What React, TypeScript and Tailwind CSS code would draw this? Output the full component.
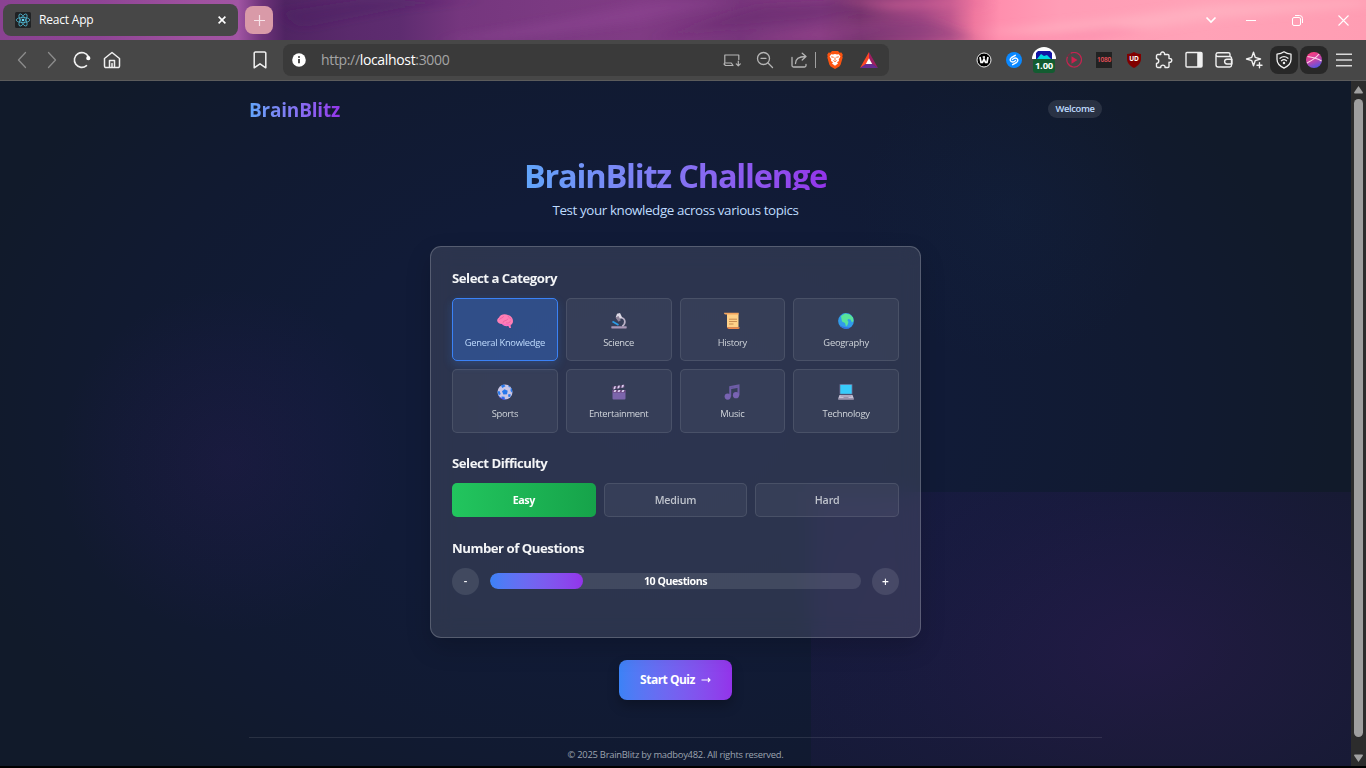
import React from "react";

const FONT = "font-['Open_Sans','Noto_Sans',sans-serif]";

function Slot({ children }: { children: React.ReactNode }) {
  return <div className="flex h-10 w-[30px] shrink-0 items-center justify-center">{children}</div>;
}

type IconProps = { size?: number; color?: string; width?: number; children: React.ReactNode };
function Line({ size = 18, color = "#f0f0f0", width = 1.4, children }: IconProps) {
  return (
    <svg width={size} height={size} viewBox="0 0 18 18" fill="none" stroke={color} strokeWidth={width} strokeLinecap="round" strokeLinejoin="round" className="shrink-0">
      {children}
    </svg>
  );
}

function ReactLogo() {
  return (
    <svg width="16" height="16" viewBox="0 0 16 16" className="shrink-0">
      <rect width="16" height="16" rx="1.5" fill="#202224" />
      <g fill="none" stroke="#4fb3cc" strokeWidth="0.8">
        <ellipse cx="8" cy="8" rx="6.8" ry="2.6" />
        <ellipse cx="8" cy="8" rx="6.8" ry="2.6" transform="rotate(60 8 8)" />
        <ellipse cx="8" cy="8" rx="6.8" ry="2.6" transform="rotate(120 8 8)" />
      </g>
      <circle cx="8" cy="8" r="1.3" fill="#61dafb" />
    </svg>
  );
}

function TabStrip() {
  return (
    <div className="relative flex h-10 items-center bg-[linear-gradient(90deg,#8a4292_0,#8f4595_100px,#a052a0_200px,#a155a3_238px,#6d3379_262px,#502463_285px,#5a2a6c_350px,#5e2c70_400px,#75367e_460px,#7b3a82_550px,#803b84_640px,#76357b_740px,#813a80_820px,#78356f_860px,#a04683_920px,#c0588e_950px,#f0789f_975px,#ff8fae_1000px,#ff9db6_1060px,#ffa2b7_1200px,#ff9db3_1366px)]">
      <svg className="absolute inset-0" width="1366" height="40" viewBox="0 0 1366 40">
        <defs><filter id="haze" x="-20%" y="-60%" width="140%" height="220%"><feGaussianBlur stdDeviation="9 4" /></filter></defs>
        <g filter="url(#haze)">
          <path d="M300 28L400 8l80-8h-120l-80 12z" fill="#4a2060" opacity=".35" />
          <path d="M440 40L560 20 660 0h80L640 22 500 40z" fill="#94489a" opacity=".35" />
          <path d="M650 40L760 6 900 0 820 20 700 30z" fill="#632a6b" opacity=".4" />
          <path d="M740 40L840 26 900 22 840 40z" fill="#a64a92" opacity=".35" />
          <path d="M840 0h140v6l-90 4z" fill="#e0689c" opacity=".5" />
          <path d="M820 30l110-10 50 20H840z" fill="#7a3579" opacity=".4" />
          <path d="M975 32L1100 20l120-16 146-4v6L1220 18l-120 18z" fill="#ffbfca" opacity=".45" />
          <path d="M990 40l120-14 40 4-60 10z" fill="#fa7ba2" opacity=".45" />
        </g>
      </svg>
      <div className="relative ml-[3px] flex h-8 w-[235px] items-center rounded-lg bg-[#474747] pl-3 pr-3">
        <ReactLogo />
        <span className="ml-2 text-[12px] tracking-[-0.2px] text-white">React App</span>
        <svg width="8" height="8" viewBox="0 0 8 8" className="ml-auto" stroke="#fff" strokeWidth="1.6"><path d="M.6.6l6.8 6.8M7.4.6L.6 7.4" /></svg>
      </div>
      <div className="relative ml-[7px] flex h-7 w-7 items-center justify-center rounded-lg bg-[#d99aa8]">
        <svg width="11" height="11" viewBox="0 0 11 11" stroke="#f7e2e8" strokeWidth="1.2"><path d="M5.500 0v11M0 5.500h11" /></svg>
      </div>
      <div className="relative ml-auto flex items-center text-white">
        <div className="flex w-10 justify-center"><svg width="12" height="8" viewBox="0 0 12 8" fill="none" stroke="#fff" strokeWidth="1.7"><path d="M1.500 1.500L6 6l4.500-4.500" /></svg></div>
        <div className="flex w-10 justify-center"><svg width="10" height="2" viewBox="0 0 10 2"><rect y="1" width="10" height="1" fill="#fff" /></svg></div>
        <div className="flex w-[52px] justify-center"><svg width="11" height="11" viewBox="0 0 11 11" fill="none" stroke="#fff" strokeWidth="1"><rect x=".5" y="2.500" width="8" height="8" rx="1.500" /><path d="M3 .5h4.500a3 3 0 0 1 3 3V8" /></svg></div>
        <div className="flex w-10 justify-center"><svg width="11" height="11" viewBox="0 0 11 11" stroke="#fff" strokeWidth="1.100"><path d="M.5.5l10 10M10.500.5l-10 10" /></svg></div>
        <div className="w-[3px]" />
      </div>
    </div>
  );
}

function BraveIcon() {
  return (
    <svg width="16" height="18" viewBox="0 0 16 18">
      <path d="M5 0h6l1.600 1.700 1.800-.2 1.400 2.300-.5 1.500.4 1.300-2.100 7.200-1.300 1.700L8 18l-4.300-2.500-1.300-1.700L.3 6.600l.4-1.300L.2 3.800l1.400-2.300 1.800.2z" fill="#fb5411" />
      <path d="M8 3l2 .5 1.700-.3 1.700 2.400-1.700 3 .3 1.400L10 11.300 11 12.500 8 14.800 5 12.500l1-1.200L4 10l.3-1.400-1.700-3 1.700-2.400L6 3.500z" fill="#fff" />
      <path d="M4.200 5.800l2.500.5M11.800 5.800l-2.500.5M8 6.500v2.700M6.400 9.500L8 10.600l1.600-1.100" stroke="#fb5411" strokeWidth=".9" fill="none" />
    </svg>
  );
}

function Toolbar() {
  return (
    <div className="flex h-[41px] items-start border-b border-[#5c5c5c] bg-[#474747] pl-[7px] pr-[7px]">
      <Slot><Line color="#8c8c8c" width={1.3}><path d="M12.500 1.500L5.500 9l7 7.500" /></Line></Slot>
      <Slot><Line color="#8c8c8c" width={1.3}><path d="M5.500 1.500L12.500 9l-7 7.500" /></Line></Slot>
      <Slot>
        <Line width={1.6}><path d="M13.500 14.700A7.400 7.400 0 1 1 15.300 5.500" /><circle cx="15.300" cy="7.200" r="1.300" fill="#fff" stroke="#fff" /></Line>
      </Slot>
      <Slot><Line width={1.5}><path d="M1.500 7.500L9 1.500l7.500 6v7.600a1.500 1.500 0 0 1-1.500 1.500H3a1.500 1.500 0 0 1-1.500-1.500zM6.500 16.500V9.500h5v7M9 12.500v4" /></Line></Slot>
      <div className="w-[118px]" />
      <Slot><Line width={1.5}><path d="M3.200 2.500A1.300 1.300 0 0 1 4.500 1h9a1.300 1.300 0 0 1 1.300 1.500v14.300L9 12.800l-5.800 4z" /></Line></Slot>
      <div className="ml-2 mt-1 flex h-8 w-[606px] items-center rounded-lg bg-[#3a3a3a] pl-[9px]">
        <svg width="14" height="14" viewBox="0 0 14 14"><circle cx="7" cy="7" r="6.800" fill="#fff" /><path d="M7 6v4.300" stroke="#3a3a3a" strokeWidth="1.800" /><circle cx="7" cy="3.900" r="1" fill="#3a3a3a" /></svg>
        <span className="ml-[15px] whitespace-nowrap text-[14px] leading-none tracking-[-0.34px] text-[#a5a5a5]">http://<span className="text-white">localhost</span>:3000</span>
        <div className="ml-auto flex items-center pr-[11px]">
          <Line color="#b5b5b5" width={1.2}><path d="M10 14.500H2.500L1 13l.8-1.200V4h14v4.500M1.800 12h6.500l1.700 2.500M15.300 10v4.800M13.300 12.900l2 2 2-2" /></Line>
          <div className="ml-[15px]"><Line color="#b5b5b5" width={1.300}><circle cx="7.500" cy="7.500" r="6" /><path d="M12 12l4.500 4.500M5 7.300h5" /></Line></div>
          <div className="ml-[16px]"><Line color="#b5b5b5" width={1.300}><path d="M2 6.500v8A1.500 1.500 0 0 0 3.500 16h11a1.500 1.500 0 0 0 1.500-1.500V13.500M5.500 12.500c0-4.500 3-7 10-7M12.200 2.200l3.800 3.300L12.200 9" /></Line></div>
          <div className="ml-[7px] h-4 w-px bg-[#a0a0a0]" />
          <div className="ml-[11px]"><BraveIcon /></div>
          <svg className="ml-[17px]" width="18" height="16" viewBox="0 0 18 16"><path d="M9 0L0 16l9-5z" fill="#ff4724" /><path d="M9 0l9 16-9-6z" fill="#9e1f63" /><path d="M0 16h18l-5.500-4h-7z" fill="#662d91" /><path d="M9 6.300l3.200 5.800H5.800z" fill="#fff" /></svg>
        </div>
      </div>
      <div className="ml-auto flex">
        <Slot><svg width="16" height="16" viewBox="0 0 16 16"><circle cx="8" cy="8" r="7" fill="#000" stroke="#eee" strokeWidth="1" /><path d="M4 5l1 5.300h1.500L8 7l1.500 3.300H11L12 5M6.700 5H9" fill="none" stroke="#fff" strokeWidth="1.700" /></svg></Slot>
        <Slot><svg width="16" height="16" viewBox="0 0 16 16"><circle cx="8" cy="8" r="8" fill="#0a88ff" /><path d="M9.300 3.300L5.300 5.700C3.700 6.900 3.900 8.500 5.200 9.500c1 .8 2.200.6 3 0l1.400-1M6.700 12.700l4-2.400c1.600-1.200 1.400-2.800.1-3.800-1-.8-2.200-.6-3 0l-1.400 1" fill="none" stroke="#fff" strokeWidth="1.400" strokeLinecap="round" /></svg></Slot>
        <Slot>
          <div className="relative h-[26px] w-[24px]">
            <svg width="24" height="18" viewBox="0 0 24 18"><path d="M0 12a12 12 0 0 1 24 0z" fill="#fff" /><path d="M4 12V6l2-2h12l2 2v6z" fill="#1113a5" /><path d="M5 12l4-5 3 2 3-1 4 4z" fill="#00d8df" /></svg>
            <div className="absolute left-px top-[12px] flex h-[14px] w-[22px] items-center justify-center rounded-[3px] bg-[#135c31] text-[9.500px] font-bold leading-none tracking-[-0.2px] text-white">1.00</div>
          </div>
        </Slot>
        <Slot><svg width="16" height="16" viewBox="0 0 16 16"><path d="M4.500 1.400A7.300 7.300 0 1 1 1.500 4.700" fill="none" stroke="#c42450" strokeWidth="1.200" /><path d="M1.500 4.500A7.300 7.300 0 0 1 5 1.300" fill="none" stroke="#7d2c43" strokeWidth="1.200" /><path d="M5.500 4.300l6 3.700-6 3.700z" fill="#d01f4e" /></svg></Slot>
        <Slot><div className="flex h-4 w-4 items-center justify-center bg-[#222] text-[6.500px] font-semibold leading-none tracking-[-0.2px] text-[#f0525b]">1080</div></Slot>
        <Slot>
          <div className="relative flex h-4 w-4 items-center justify-center">
            <svg className="absolute inset-0" width="16" height="16" viewBox="0 0 16 16"><path d="M8 0c2 1.300 4 1.800 7 2v5c0 4-3 7-7 9-4-2-7-5-7-9V2c3-.2 5-.7 7-2z" fill="#800000" /></svg>
            <span className="relative -mt-[2px] text-[6.500px] font-bold leading-none text-white">UD</span>
          </div>
        </Slot>
        <Slot><Line><path d="M1.500 4.800a1.300 1.300 0 0 1 1.300-1.300h3c-.8-3.300 4.400-3.300 3.700 0h3.200A1.300 1.300 0 0 1 14 4.800v2.700c3.700-.7 3.700 4.400 0 3.800v3.900a1.300 1.300 0 0 1-1.300 1.300H10c.7-3.200-4.900-3.200-4.200 0h-3a1.300 1.300 0 0 1-1.300-1.300v-2.700c3-.3 3-4.500 0-4.800z" /></Line></Slot>
        <Slot><Line><rect x="1" y="1.500" width="16" height="14.500" rx="1" /><path d="M12.200 2h4.800v14h-4.800z" fill="#f0f0f0" stroke="none" /></Line></Slot>
        <Slot><Line><path d="M15 5.500V3.200a1.500 1.500 0 0 0-1.500-1.500H3A2 2 0 0 0 1 3.500v10.300A2.200 2.200 0 0 0 3.200 16h11.600a1.700 1.700 0 0 0 1.700-1.700V7.200a1.700 1.700 0 0 0-1.700-1.700H3A2 2 0 0 1 1 3.500M17 8.200h-5a2.300 2.300 0 0 0 0 4.800h5z" /></Line></Slot>
        <Slot><Line><path d="M8.500 1.200l1.700 5.100 5.300 1.700-5.300 1.700-1.700 5.100-1.700-5.100L1.500 8l5.300-1.700zM14.500 11.800v5M12 14.300h5" /></Line></Slot>
        <Slot><div className="flex h-7 w-7 shrink-0 items-center justify-center rounded-lg bg-[#282828]"><Line width={1.300}><path d="M9 .8c2 1.500 4.500 2.200 7 2.300v5.200c0 4.200-3 7-7 8.900-4-1.900-7-4.700-7-8.900V3.100C4.500 3 7 2.300 9 .8zM5 7.200c2.500-2 5.500-2 8 0M6.500 9.700c1.600-1.300 3.400-1.300 5 0" /><circle cx="9" cy="12" r=".6" fill="#fff" /></Line></div></Slot>
        <Slot>
          <div className="flex h-7 w-7 shrink-0 items-center justify-center rounded-lg bg-[#282828]">
            <svg width="16" height="16" viewBox="0 0 16 16"><defs><linearGradient id="orb" x1=".3" y1="0" x2=".7" y2="1"><stop offset="0" stopColor="#ff3d7c" /><stop offset=".5" stopColor="#c544a8" /><stop offset="1" stopColor="#4c55e8" /></linearGradient></defs><circle cx="8" cy="8" r="8" fill="url(#orb)" /><path d="M1 11C5 9 10 6 13 2M1.500 4.500C6 5.500 11 6 15.500 9" fill="none" stroke="#ffd3e8" strokeWidth="1.100" /></svg>
          </div>
        </Slot>
        <Slot><svg width="16" height="14" viewBox="0 0 16 14" stroke="#dadada" strokeWidth="1.500"><path d="M0 1.300h16M0 7h16M0 12.700h16" /></svg></Slot>
      </div>
    </div>
  );
}

const categories: { name: string; icon: React.ReactNode }[] = [
  {
    name: "General Knowledge",
    icon: (
      <>
        <path d="M2 4.500C3.500 1 8 .6 11 2c3 .8 5 3 5 6 0 2-.9 3.500-2.500 4L14 15c-1.500.5-2.300-.7-2.500-2C8 13.600 6 12.500 5 11 2 11 .5 9.500.2 8 0 6.500.8 5.200 2 4.500z" fill="#ff7fb5" />
        <path d="M2.500 6.500c1-2 3.500-1 4-3M6 9.500c0-2.500 3.500-1 5-3.500M9.500 10c2 .5 3.500-.5 4-2M11 3c0 2 2.500 1.500 3 3" fill="none" stroke="#e8589f" strokeWidth=".7" strokeLinecap="round" />
        <path d="M5.500 11c3 1.500 6 .5 8 1" fill="none" stroke="#f562cf" />
      </>
    ),
  },
  {
    name: "Science",
    icon: (
      <>
        <rect x=".3" y="13.200" width="15.400" height="2.200" rx=".6" fill="#a896b5" />
        <path d="M9.500 4.500c6 1 5 6.500 1.800 8.700" fill="none" stroke="#bbb2c7" strokeWidth="1.700" />
        <path d="M6 .8L9 0l2.200 4.500L7 7 4.800 4z" fill="#ded9e5" />
        <path d="M4.500 4.500l3 4.300 2.300-1.500L7.500 3z" fill="#8d8299" />
        <path d="M1.500 8.500l6 3.500" stroke="#2c9de7" strokeWidth="1.700" />
      </>
    ),
  },
  {
    name: "History",
    icon: (
      <>
        <path d="M3 .5h11.500v14H3z" fill="#ffd188" />
        <path d="M0 -.2h14.700v1.700H1.500A1.500 1.500 0 0 1 0 -.2z" fill="#f3a55f" />
        <path d="M3 14.300h12.700c0 1-.5 1.700-1.500 1.700H5a2 2 0 0 1-2-1.700z" fill="#f08a4b" />
        <path d="M5 6.200h8M5 8.500h8M5 11h4.500" stroke="#c88c50" strokeWidth="1" />
      </>
    ),
  },
  {
    name: "Geography",
    icon: (
      <>
        <circle cx="8" cy="8" r="7.900" fill="#319bea" />
        <path d="M1.500 12A7.800 7.800 0 0 0 13 14.200 C8 15 4 13.500 1.500 12z" fill="#356be0" />
        <path d="M3 3L7 .4l5 1 3 3.100.5 3.500-1.500 1.500-1.500-3L10 6l-.5 1.500L10.500 9 9.500 12 8 13.500 7 10 4 8.500 3.500 6z" fill="#58e39a" />
      </>
    ),
  },
  {
    name: "Sports",
    icon: (
      <>
        <circle cx="8" cy="8" r="7.500" fill="#c9c6e6" />
        <path d="M7.500 5.200l3.200 1.500-.7 3.500-3.600.3L5 7.300zM4 1.500l3-1 1.500 1.800L5.200 4zM.6 7.500L2.500 7l1.200 3-2 1.500zM15.400 9L13.500 7l.3-3.500L15 5zM4.500 12.500l3 .3.500 2.600-3-.7zM13.500 12.800l-2 .2-.5-2.500 2.500-.5zM11 1.200l2.500 1.600-1.500.8z" fill="#2878ec" />
        <path d="M1.500 12a7.500 7.500 0 0 0 8.500 3.200C7 15 4 14 1.500 12z" fill="#4a4ae0" />
      </>
    ),
  },
  {
    name: "Entertainment",
    icon: (
      <>
        <path d="M1.500 6h13v8.500a1 1 0 0 1-1 1h-11a1 1 0 0 1-1-1z" fill="#7c65ab" />
        <path d="M1.500 6h13v2.500h-13z" fill="#6b477c" />
        <path d="M1 2.800L13.500.5l.5 2.700L1.500 5.500z" fill="#59436d" />
        <path d="M3 2.500l2-.4-.8 2.900-1.800.4zM7 1.800l2-.4L8.200 4.200l-2 .4zM11 1l2-.3-.7 2.700-2 .3zM3.500 6h2l-1 2h-2zM7.500 6h2l-1 2h-2zM11.500 6h2l-1 2h-2z" fill="#dccdf0" />
      </>
    ),
  },
  {
    name: "Music",
    icon: (
      <>
        <path d="M6.200 12.500V3l8.300-1.500v9.700" fill="none" stroke="#6e5da6" strokeWidth="2" />
        <path d="M6.200 4.500l8.300-1.500" stroke="#6e5da6" strokeWidth="1.500" />
        <circle cx="3.700" cy="12.600" r="3.100" fill="#7863b2" />
        <circle cx="12" cy="11.200" r="3.100" fill="#7863b2" />
      </>
    ),
  },
  {
    name: "Technology",
    icon: (
      <>
        <rect x="1.500" y="0" width="13" height="10.500" rx=".7" fill="#68658b" />
        <rect x="2.300" y=".8" width="11.400" height="9" fill="#38ccfb" />
        <path d="M1.500 11h13l1.300 3.500H.2z" fill="#c7c1d4" />
        <path d="M2.500 12h11M5.500 13.500h5" stroke="#8e87a1" strokeWidth=".8" />
        <path d="M.2 14.300h15.600v1.400H.2z" fill="#aaa0b8" />
      </>
    ),
  },
];

function CategoryCard({ name, icon, active }: { name: string; icon: React.ReactNode; active: boolean }) {
  return (
    <div
      className={
        "flex flex-col items-center rounded-[5px] border pt-[14px] " +
        (active
          ? "border-[#3b82f6] bg-[#3b82f6]/35 text-[#bfdbfe] shadow-[0_4px_10px_rgba(59,130,246,0.22)]"
          : "border-white/10 bg-white/5 text-[#d1d5db]")
      }
    >
      <svg className="shrink-0 overflow-visible" width="16" height="16" viewBox="0 0 16 16">{icon}</svg>
      <span className="mt-[7px] whitespace-nowrap text-[9.4px] font-medium leading-[14px] tracking-[-0.28px]">{name}</span>
    </div>
  );
}

function SectionTitle({ children }: { children: React.ReactNode }) {
  return <h2 className="text-[13.2px] font-bold leading-[20px] tracking-[-0.48px] text-[#f4f5f7]">{children}</h2>;
}

function SetupCard() {
  const count = 10;
  return (
    <section className="mt-[26px] h-[392px] w-[491px] rounded-[11px] border border-white/20 bg-white/[0.115] px-[21px] pt-[21px] shadow-[0_10px_25px_rgba(0,0,0,0.18)] backdrop-blur-[11px]">
      <SectionTitle>Select a Category</SectionTitle>
      <div className="mt-[10px] grid grid-cols-4 grid-rows-[63px_64px] gap-2">
        {categories.map((c, i) => (
          <CategoryCard key={c.name} name={c.name} icon={c.icon} active={i === 0} />
        ))}
      </div>
      <div className="mt-[20px]"><SectionTitle>Select Difficulty</SectionTitle></div>
      <div className="mt-[10px] grid h-[34px] grid-cols-3 gap-2 text-[10.7px] font-semibold tracking-[-0.15px]">
        <div className="flex items-center justify-center rounded-[5px] bg-linear-to-r from-[#22c55e] to-[#16a34a] font-bold tracking-[-0.45px] text-white">Easy</div>
        <div className="flex items-center justify-center rounded-[5px] border border-white/10 bg-white/5 text-[#bfc3cc]">Medium</div>
        <div className="flex items-center justify-center rounded-[5px] border border-white/10 bg-white/5 text-[#bfc3cc]">Hard</div>
      </div>
      <div className="mt-[21px]"><SectionTitle>Number of Questions</SectionTitle></div>
      <div className="mt-[10px] flex items-center gap-[11px]">
        <div className="flex h-[27px] w-[27px] items-center justify-center rounded-full bg-white/10 text-[11px] font-semibold text-white">-</div>
        <div className="relative -top-px h-4 flex-1 overflow-hidden rounded-full bg-white/10">
          <div className="h-full rounded-full bg-linear-to-r from-[#3b82f6] to-[#9333ea]" style={{ width: (count / 40) * 100 + "%" }} />
          <span className="absolute inset-0 flex items-center justify-center pt-px text-[10.7px] font-bold leading-none tracking-[-0.5px] text-white">{count} Questions</span>
        </div>
        <div className="flex h-[27px] w-[27px] items-center justify-center rounded-full bg-white/10 text-[12px] font-semibold text-white">+</div>
      </div>
    </section>
  );
}

function Scrollbar() {
  return (
    <div className="flex h-full w-[15px] shrink-0 flex-col items-center bg-[#2c2c2c]">
      <svg className="mt-[5px] shrink-0" width="9" height="8" viewBox="0 0 9 8"><path d="M4.500 0L9 6.500 8.500 7.500h-8L0 6.500z" fill="#a0a0a0" /></svg>
      <div className="mt-[5px] h-[638px] w-[9px] shrink-0 rounded-full bg-[#9f9f9f]" />
      <svg className="mt-[17px] shrink-0" width="9" height="8" viewBox="0 0 9 8"><path d="M4.500 8L9 1.500 8.500.5h-8L0 1.500z" fill="#a0a0a0" /></svg>
    </div>
  );
}

export default function App() {
  return (
    <div className={"flex h-[768px] w-[1366px] flex-col overflow-hidden bg-black antialiased " + FONT}>
      <TabStrip />
      <Toolbar />
      <div className="flex h-[685px]">
        <main className="relative isolate flex-1 overflow-hidden bg-[#111827] bg-[radial-gradient(ellipse_700px_480px_at_47%_48%,#111b3a_0%,#111b37_45%,#111a31_75%,#111a2a_100%)]">
          <div className="absolute left-[60px] top-[210px] -z-10 h-[340px] w-[340px] rounded-full bg-[radial-gradient(circle,rgba(76,28,125,0.14)_0%,rgba(60,28,120,0.07)_45%,transparent_72%)]" />
          <div className="absolute left-[860px] top-[-20px] -z-10 h-[300px] w-[300px] rounded-full bg-[radial-gradient(circle,rgba(20,55,100,0.10)_0%,transparent_72%)]" />
          <div className="absolute left-[811px] top-[411px] -z-10 h-[300px] w-[540px] bg-[radial-gradient(ellipse_380px_240px_at_335px_160px,rgba(80,28,130,0.26)_0%,rgba(70,28,130,0.14)_65%,rgba(70,28,130,0.09)_100%)]" />
          <div className="mx-auto flex h-full w-[853px] flex-col items-center">
            <header className="flex h-[42px] w-full items-center justify-between pt-[15px]">
              <div className="bg-linear-to-r from-[#60a5fa] to-[#9333ea] bg-clip-text pt-px text-[19px] font-bold leading-[27px] tracking-[-0.2px] text-transparent">BrainBlitz</div>
              <div className="-mt-px flex h-[18px] w-[54px] items-center justify-center rounded-full bg-white/10 text-[9.400px] font-semibold leading-none tracking-[-0.35px] text-[#bfdbfe]">Welcome</div>
            </header>
            <h1 className="mt-[34px] h-[33px] whitespace-nowrap bg-linear-to-r from-[#60a5fa] to-[#9333ea] bg-clip-text pt-px text-[32.500px] font-bold leading-[35px] tracking-[-1.200px] text-transparent">BrainBlitz Challenge</h1>
            <p className="mt-[10px] whitespace-nowrap text-[13.400px] leading-[20px] tracking-[-0.400px] text-[#bfdbfe]">Test your knowledge across various topics</p>
            <SetupCard />
            <button className="mt-[22px] flex h-10 w-[113px] shrink-0 items-center justify-center gap-[6px] rounded-lg bg-linear-to-r from-[#3b82f6] to-[#9333ea] text-[12px] font-bold tracking-[-0.500px] text-white shadow-[0_6px_12px_rgba(0,0,0,0.25)]">
              Start Quiz
              <svg width="10" height="8" viewBox="0 0 10 8" fill="none" stroke="#fff" strokeWidth="1.100"><path d="M.5 4h8.500M7 2L9 4 7 6" /></svg>
            </button>
            <footer className="mt-[37px] w-full border-t border-white/10 pt-[10px] text-center text-[9.400px] leading-[14px] tracking-[-0.250px] text-[#9ca3af]">© 2025 BrainBlitz by madboy482. All rights reserved.</footer>
          </div>
        </main>
        <Scrollbar />
      </div>
    </div>
  );
}
